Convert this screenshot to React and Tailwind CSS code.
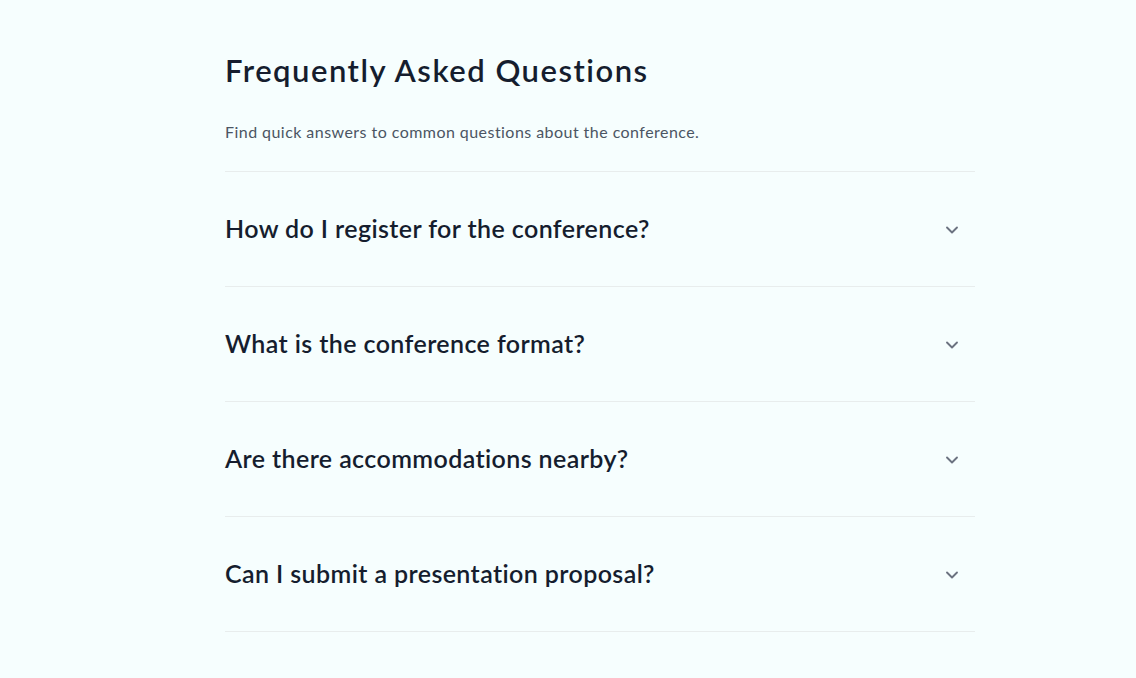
import React from 'react';
import { ChevronDown } from 'lucide-react';

const faqs = [
    'How do I register for the conference?',
    'What is the conference format?',
    'Are there accommodations nearby?',
    'Can I submit a presentation proposal?',
];

export default function App() {
    return (
        <div className="min-h-screen bg-[#f6fefe] font-['Lato',sans-serif]">
            <div className="w-[750px] ml-[225px] pt-[52px]">
                {/* Header */}
                <h1 className="text-[31px] leading-[36px] font-semibold tracking-[1.5px] text-[#151d2e]">
                    Frequently Asked Questions
                </h1>
                <p className="mt-[32px] text-[16px] leading-[24px] tracking-[0.45px] text-[#4b5563]">
                    Find quick answers to common questions about the conference.
                </p>

                {/* Questions */}
                <div className="mt-[27px] border-t border-[#e8eded]">
                    {faqs.map((q) => (
                        <button
                            key={q}
                            className="w-full h-[115px] flex items-center justify-between border-b border-[#e8eded] text-left"
                        >
                            <span className="text-[25px] font-semibold tracking-[0.4px] text-[#151d2e]">{q}</span>
                            <ChevronDown className="w-5 h-5 mr-[13px] mt-[2px] text-[#6b7280]" strokeWidth={2.25} />
                        </button>
                    ))}
                </div>
            </div>
        </div>
    );
}
